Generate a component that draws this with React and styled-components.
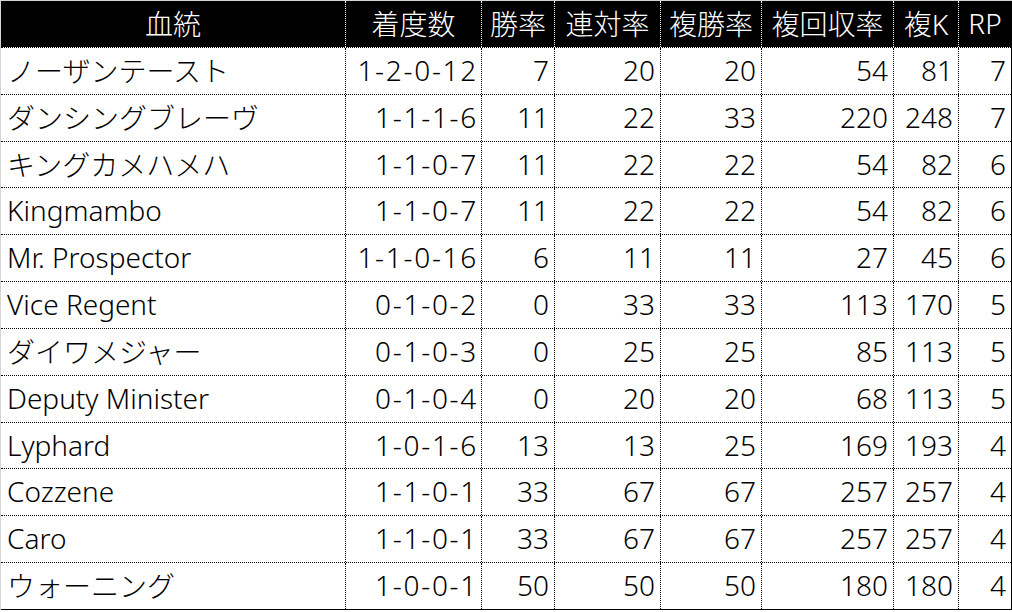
import React from 'react';
import styled, { createGlobalStyle } from 'styled-components';

const GlobalStyle = createGlobalStyle`
  html, body {
    margin: 0;
    padding: 0;
    background: #fff;
  }
  body {
    font-family: 'Noto Sans', 'Noto Sans CJK JP', sans-serif;
    font-weight: 300;
    color: #000;
  }
`;

const columns = [
  { key: 'name', label: '血統', width: 344, align: 'left' },
  { key: 'record', label: '着度数', width: 136, spaced: true },
  { key: 'win', label: '勝率', width: 73 },
  { key: 'quinella', label: '連対率', width: 106 },
  { key: 'place', label: '複勝率', width: 101 },
  { key: 'return', label: '複回収率', width: 132 },
  { key: 'k', label: '複K', width: 65 },
  { key: 'rp', label: 'RP', width: 53 },
];

const rows = [
  ['ノーザンテースト', '1-2-0-12', 7, 20, 20, 54, 81, 7],
  ['ダンシングブレーヴ', '1-1-1-6', 11, 22, 33, 220, 248, 7],
  ['キングカメハメハ', '1-1-0-7', 11, 22, 22, 54, 82, 6],
  ['Kingmambo', '1-1-0-7', 11, 22, 22, 54, 82, 6],
  ['Mr. Prospector', '1-1-0-16', 6, 11, 11, 27, 45, 6],
  ['Vice Regent', '0-1-0-2', 0, 33, 33, 113, 170, 5],
  ['ダイワメジャー', '0-1-0-3', 0, 25, 25, 85, 113, 5],
  ['Deputy Minister', '0-1-0-4', 0, 20, 20, 68, 113, 5],
  ['Lyphard', '1-0-1-6', 13, 13, 25, 169, 193, 4],
  ['Cozzene', '1-1-0-1', 33, 67, 67, 257, 257, 4],
  ['Caro', '1-1-0-1', 33, 67, 67, 257, 257, 4],
  ['ウォーニング', '1-0-0-1', 50, 50, 50, 180, 180, 4],
];

const gridColumns = columns.map((c) => `${c.width}px`).join(' ');

const Sheet = styled.div`
  width: 1011px;
  border-top: 1px solid #d4d4d4;
  border-left: 1px solid #d4d4d4;
`;

const Table = styled.div`
  width: 1010px;
  border-right: 1px solid #000;
  border-bottom: 1px solid #000;
  display: flex;
  flex-direction: column;
`;

const HeaderRow = styled.div`
  display: grid;
  grid-template-columns: ${gridColumns};
  height: 46px;
  background: #000;
  color: #fff;
`;

const Body = styled.div`
  height: 562px;
  display: flex;
  flex-direction: column;
`;

const Row = styled.div`
  flex: 1;
  display: grid;
  grid-template-columns: ${gridColumns};
  border-top: 1px dotted #000;
`;

const HeadCell = styled.div`
  display: flex;
  align-items: center;
  justify-content: center;
  padding-bottom: 2px;
  font-size: 28px;
  white-space: nowrap;
  & + & {
    border-left: 1px dotted #fff;
  }
`;

const Cell = styled.div`
  display: flex;
  align-items: center;
  justify-content: ${(p) => (p.$align === 'left' ? 'flex-start' : 'flex-end')};
  padding: ${(p) =>
    p.$align === 'left' ? '0 0 2px 6px' : p.$spaced ? '0 3px 2px 0' : '0 5px 2px 0'};
  letter-spacing: ${(p) => (p.$spaced ? '1.7px' : 'normal')};
  font-size: 28px;
  white-space: nowrap;
  overflow: hidden;
  & + & {
    border-left: 1px dotted #000;
  }
`;

const App = () => (
  <>
    <GlobalStyle />
    <Sheet>
      <Table>
        <HeaderRow>
          {columns.map((c) => (
            <HeadCell key={c.key}>{c.label}</HeadCell>
          ))}
        </HeaderRow>
        <Body>
          {rows.map((r) => (
            <Row key={r[0]}>
              {r.map((v, i) => (
                <Cell
                  key={columns[i].key}
                  $align={columns[i].align}
                  $spaced={columns[i].spaced}
                >
                  {v}
                </Cell>
              ))}
            </Row>
          ))}
        </Body>
      </Table>
    </Sheet>
  </>
);

export default App;
